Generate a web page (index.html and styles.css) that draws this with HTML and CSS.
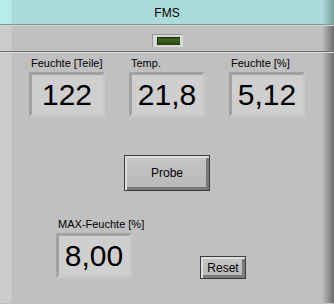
FILE: index.html
```html
<!DOCTYPE html>
<html lang="de">
<head>
    <meta charset="UTF-8">
    <meta name="viewport" content="width=device-width, initial-scale=1.0">
    <title>FMS</title>

    <link rel="stylesheet" href="styles.css">
</head>
<body>
    <div class="title">FMS</div>
    <div class="ledbar">
        <div class="led"><div class="led-lamp"></div></div>
    </div>
    <section class="panel">
        <div class="row">
            <div class="field">
                <div class="label">Feuchte [Teile]</div>
                <div class="display">122</div>
            </div>
            <div class="field">
                <div class="label">Temp.</div>
                <div class="display">21,8</div>
            </div>
            <div class="field">
                <div class="label">Feuchte [%]</div>
                <div class="display">5,12</div>
            </div>
        </div>

        <button class="btn probe">Probe</button>

        <div class="bottom">
            <div class="field">
                <div class="label">MAX-Feuchte [%]</div>
                <div class="display">8,00</div>
            </div>
            <button class="btn reset">Reset</button>
        </div>
    </section>
</body>
</html>
```

FILE: styles.css
```css
*, *:before, *:after{
    margin: 0;
    padding: 0;
    box-sizing: border-box;
}
body{
    width: 334px;
    height: 304px;
    overflow: hidden;
    font-family: "Liberation Sans", Arial, sans-serif;
    background: #c0c0c0;
}
.title{
    height: 25px;
    line-height: 27px;
    text-align: center;
    font-size: 12px;
    color: #000;
    background: linear-gradient(to right, #b6ecea 0, #b6ecea 11px, #acdcda 12px, #acdcda 322px, #7aa09e 334px);
    border-bottom: 1px solid #7c9896;
}
.ledbar{
    height: 27px;
    display: flex;
    justify-content: center;
    align-items: flex-start;
    padding-top: 8px;
    padding-left: 1px;
    background: linear-gradient(to right, #cccccc 0, #cccccc 11px, #c0c0c0 12px, #c0c0c0 322px, #6c6c6c 334px);
    border-top: 1px solid #d8d8d8;
    border-bottom: 1px solid #6e6e6e;
}
.led{
    width: 31px;
    height: 13px;
    padding: 2px 3px 2px 4px;
    background: #d8d8d8;
    border-top: 1px solid #9c9c9c;
    border-left: 1px solid #9c9c9c;
}
.led-lamp{
    width: 100%;
    height: 100%;
    background: linear-gradient(to bottom, #2c4c14 0, #3c6a1c 35%, #244010 100%);
    box-shadow: inset 1px 1px 0 #1a2a0c;
}
.panel{
    height: 251px;
    padding-top: 4px;
    border-top: 1px solid #dcdcdc;
    background: linear-gradient(to right, #cccccc 0, #cccccc 11px, #c0c0c0 12px, #c0c0c0 322px, #6c6c6c 334px);
}
.row{
    display: flex;
    gap: 24px;
    padding-left: 29px;
}
.field{
    width: 76px;
}
.label{
    font-size: 11px;
    line-height: 13px;
    padding-left: 2px;
    margin-bottom: 2px;
    white-space: nowrap;
    color: #000;
}
.display{
    height: 45px;
    line-height: 40px;
    text-align: center;
    font-size: 30px;
    color: #000;
    background: #cfcfcf;
    border: 3px solid;
    border-color: #a2a2a2 #c8c8c8 #c8c8c8 #a2a2a2;
}
.btn{
    display: block;
    font-family: "Liberation Sans", Arial, sans-serif;
    font-size: 12px;
    color: #000;
    border: 1px solid #3c3c3c;
    background: linear-gradient(to bottom, #c6c6c6, #b8b8b8);
    box-shadow: inset 2px 2px 0 #dedede, inset -3px -3px 0 #7a7a7a;
}
.probe{
    width: 86px;
    height: 36px;
    margin: 38px auto 0;
    padding-bottom: 1px;
}
.bottom{
    display: flex;
    align-items: flex-end;
    margin-top: 27px;
    padding-left: 56px;
}
.reset{
    width: 46px;
    height: 23px;
    margin-left: 68px;
    margin-bottom: -1px;
}
```
